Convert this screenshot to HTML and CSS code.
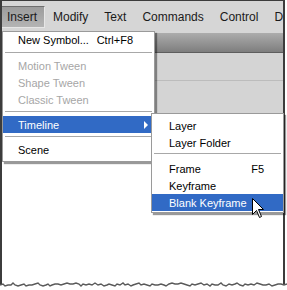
FILE: index.html
```html
<!DOCTYPE html>
<html>
<head>
<meta charset="utf-8">
<link rel="stylesheet" href="styles.css">
</head>
<body>
<div class="screen">
  <div class="menubar">
    <span class="mb-item active">Insert</span>
    <span class="mb-item">Modify</span>
    <span class="mb-item">Text</span>
    <span class="mb-item">Commands</span>
    <span class="mb-item">Control</span>
    <span class="mb-item">D</span>
  </div>
  <div class="band"></div>
  <div class="workspace"><div class="ws-line"></div></div>

  <div class="menu main-menu">
    <div class="row first"><span class="label">New Symbol...</span><span class="shortcut">Ctrl+F8</span></div>
    <div class="sep sep-a"></div>
    <div class="row disabled"><span class="label">Motion Tween</span></div>
    <div class="row disabled"><span class="label">Shape Tween</span></div>
    <div class="row disabled"><span class="label">Classic Tween</span></div>
    <div class="sep sep-b"></div>
    <div class="row selected"><span class="label">Timeline</span><span class="arrow"></span></div>
    <div class="sep sep-b"></div>
    <div class="row"><span class="label">Scene</span></div>
  </div>

  <div class="menu sub-menu">
    <div class="row"><span class="label">Layer</span></div>
    <div class="row"><span class="label">Layer Folder</span></div>
    <div class="sep sep-c"></div>
    <div class="row"><span class="label">Frame</span><span class="shortcut sub-sc">F5</span></div>
    <div class="row"><span class="label">Keyframe</span></div>
    <div class="row selected"><span class="label">Blank Keyframe</span></div>
  </div>

  <svg class="cursor" width="13" height="21" viewBox="0 0 13 21">
    <path d="M0.5,0.5 L0.5,16.5 L4.5,12.5 L7.5,19.5 L9.5,18.5 L6.5,11.5 L11.5,11.5 Z" fill="#fff" stroke="#000" stroke-width="1" stroke-linejoin="miter"/>
  </svg>

  <svg class="torn" width="287" height="8" viewBox="0 0 287 8">
    <polyline fill="none" stroke="#5a5a5a" stroke-width="1.4" points="0,4 3,3 5,5 8,4 11,4 13,2 15,4 18,5 21,4 24,3 26,5 29,4 32,4 35,3 38,2 40,4 43,5 46,4 48,3 50,5 52,4 55,3 58,3 61,4 64,3 67,2 70,3 73,3 76,2 79,3 81,5 83,3 86,4 89,3 92,4 95,2 98,4 101,3 104,5 107,4 109,3 112,4 115,5 117,3 120,4 123,2 125,4 128,3 131,5 133,4 136,3 139,2 141,4 144,3 147,4 150,5 152,3 155,4 158,4 161,3 164,4 166,5 169,3 172,2 175,3 178,3 181,2 184,3 187,4 190,5 192,3 195,4 198,3 201,2 204,4 207,3 210,5 212,3 215,4 218,4 221,2 223,4 226,5 229,3 232,4 235,3 237,2 240,4 243,5 245,3 248,4 251,3 254,4 257,2 260,3 263,4 266,4 269,3 272,5 275,4 278,3 281,3 284,4 287,3"/>
  </svg>
</div>
</body>
</html>
```

FILE: styles.css
```css
html, body {
  margin: 0;
  padding: 0;
  background: #ffffff;
}

body {
  width: 287px;
  height: 290px;
  overflow: hidden;
  font-family: "Liberation Sans", Arial, sans-serif;
}

.screen {
  position: relative;
  width: 281px;
  height: 284px;
  border-left: 2px solid #3c3c3c;
  border-right: 2px solid #3c3c3c;
  border-top: 1px solid #3c3c3c;
  background: #ffffff;
}

.menubar {
  display: flex;
  align-items: center;
  height: 32px;
  background: #d6d6d6;
  overflow: hidden;
  white-space: nowrap;
}

.mb-item {
  display: flex;
  align-items: center;
  flex-shrink: 0;
  height: 22px;
  padding: 0 8px;
  font-size: 12px;
  color: #1a1a1a;
  box-sizing: border-box;
}

.mb-item.active {
  margin-left: -1px;
  padding: 0 7px 0 5px;
  background: linear-gradient(#9c9c9c, #b4b4b4);
  border-top: 1px solid #6e6e6e;
  border-left: 1px solid #6e6e6e;
  border-right: 1px solid #e6e6e6;
  border-bottom: 1px solid #e6e6e6;
}

.band {
  height: 19px;
  background: linear-gradient(#acacac, #7e7e7e);
  border-bottom: 1px solid #5e5e5e;
}

.workspace {
  height: 78px;
  background: #d4d4d4;
  padding-top: 27px;
  box-sizing: border-box;
}

.ws-line {
  height: 1px;
  background: #bcbcbc;
}

.menu {
  position: absolute;
  background: #ffffff;
  border: 1px solid #9a9a9a;
  box-shadow: 2px 2px 1px rgba(0, 0, 0, 0.4);
  font-size: 11px;
  color: #000;
  box-sizing: border-box;
}

.main-menu {
  left: 0;
  top: 30px;
  width: 153px;
  height: 131px;
  padding-bottom: 3px;
}

.sub-menu {
  left: 149px;
  top: 112px;
  width: 133px;
  height: 100px;
  padding-top: 3px;
}

.row {
  display: flex;
  align-items: center;
  height: 17px;
  white-space: nowrap;
}

.main-menu .row {
  padding-left: 15px;
}

.main-menu .row.first {
  height: 16px;
}

.sub-menu .row {
  padding-left: 17px;
}

.row.disabled {
  color: #a6a6a6;
}

.row.selected {
  background: #316ac5;
  color: #ffffff;
}

.shortcut {
  margin-left: auto;
  margin-right: 21px;
}

.sub-sc {
  margin-right: 19px;
}

.arrow {
  margin-left: auto;
  margin-right: 6px;
  width: 0;
  height: 0;
  border-left: 4px solid #ffffff;
  border-top: 4px solid transparent;
  border-bottom: 4px solid transparent;
}

.sep {
  height: 1px;
  background: #a8a8a8;
  margin: 0 2px;
}

.sep-a {
  margin-top: 4px;
  margin-bottom: 4px;
}

.sep-b {
  margin-top: 3px;
  margin-bottom: 4px;
}

.sep-c {
  margin-top: 2px;
  margin-bottom: 6px;
}

.cursor {
  position: absolute;
  left: 250px;
  top: 197px;
}

.torn {
  position: absolute;
  left: -2px;
  top: 280px;
}
```
